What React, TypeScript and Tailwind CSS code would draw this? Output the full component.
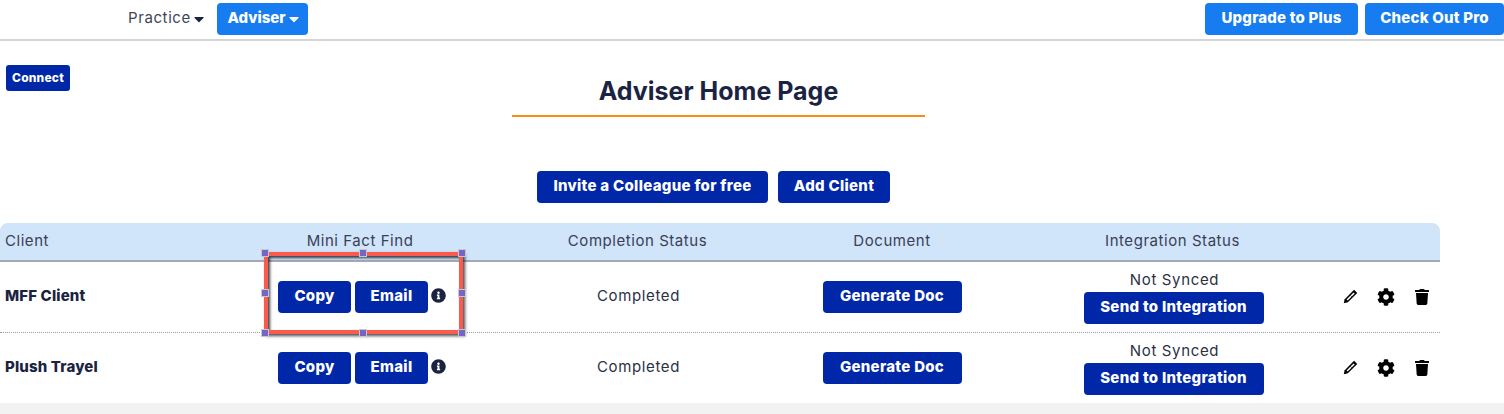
import { FaCaretDown, FaCog, FaTrash, FaInfoCircle } from "react-icons/fa";

const font = "font-['Inter','Liberation_Sans',sans-serif]";
const dark = "text-[#1b2342]";
const cols = "grid grid-cols-[260px_200px_355px_154px_361px_110px]";

function Btn({ children, className = "" }: { children: React.ReactNode; className?: string }) {
  return (
    <button className={`flex items-center justify-center h-8 pb-[1px] rounded-[4px] bg-[#0027a8] text-white text-[15px] font-extrabold tracking-[0.3px] whitespace-nowrap ${className}`}>
      {children}
    </button>
  );
}

function Pencil() {
  return (
    <svg viewBox="0 0 16 16" className="w-[15px] h-[15px]" fill="none">
      <path d="M11.8 .8 15.2 4.2 5.2 14.2 .8 15.2l1-4.4z" fill="#000" />
      <path d="M11.3 3.6 12.5 4.8 5 12.3 3.8 11.1z" fill="#fff" />
      <path d="M8 6.9 9.2 8.1" stroke="#000" strokeWidth="0.9" />
    </svg>
  );
}

function Handle({ className }: { className: string }) {
  return <span className={`absolute w-[8px] h-[8px] bg-[#7466c8] border border-[#c8c8c8] ${className}`} />;
}

function Row({ name, selected }: { name: string; selected?: boolean }) {
  return (
    <div className={`${cols} h-[70px] items-center text-[15px] tracking-[0.65px]`}>
      <div className={`pl-[5px] pb-[2px] font-extrabold tracking-[0.15px] ${dark}`}>{name}</div>
      <div className="relative flex items-center h-full">
        <div className="flex items-center gap-1 pl-[18px]">
          <Btn className="w-[73px]">Copy</Btn>
          <Btn className="w-[73px]">Email</Btn>
          <FaInfoCircle className="ml-[-1px] mb-[3px] w-[15px] h-[15px] text-[#1b2342]" />
        </div>
        {selected && (
          <div className="absolute left-[4px] top-[-10px] w-[199px] h-[82px] border-[4px] border-[#fb5a4e] shadow-[inset_2px_2px_3px_rgba(0,0,0,0.75),2px_2px_3px_rgba(0,0,0,0.7)]">
            <Handle className="left-[-7px] top-[-7px]" />
            <Handle className="left-[91px] top-[-7px]" />
            <Handle className="right-[-7px] top-[-7px]" />
            <Handle className="left-[-7px] top-[33px]" />
            <Handle className="right-[-7px] top-[33px]" />
            <Handle className="left-[-7px] bottom-[-7px]" />
            <Handle className="left-[91px] bottom-[-7px]" />
            <Handle className="right-[-7px] bottom-[-7px]" />
          </div>
        )}
      </div>
      <div className="text-center text-[#2b3145] pl-[2px] pb-[2px]">Completed</div>
      <div className="flex justify-center">
        <Btn className="w-[139px]">Generate Doc</Btn>
      </div>
      <div className="flex flex-col items-center pl-[48px]">
        <div className="text-[#2b3145] leading-[20px] mb-[2px] pl-[2px]">Not Synced</div>
        <Btn className="w-[180px]">Send to Integration</Btn>
      </div>
      <div className="flex items-center pl-[13px] pb-[1px] text-black">
        <Pencil />
        <FaCog className="ml-[19px] w-[18px] h-[18px]" />
        <FaTrash className="ml-[20px] w-[14px] h-[16px]" />
      </div>
    </div>
  );
}

export default function App() {
  return (
    <div className={`${font} w-[1504px] h-[414px] overflow-hidden bg-white flex flex-col`}>
      <header className="flex items-center justify-between h-[41px] shrink-0 border-b-2 border-[#d4d4d4] pb-[2px]">
        <div className="flex items-center pl-[128px]">
          <span className="flex items-center text-[15px] tracking-[0.6px] text-[#3f4658] w-[76px]">
            Practice
            <FaCaretDown className="w-4 h-4 text-[#1b2342] shrink-0" />
          </span>
          <button className="ml-[13px] flex items-center justify-center w-[91px] h-8 pl-[4px] rounded-[4px] bg-[#167cf0] text-white text-[15px] font-extrabold">
            Adviser
            <FaCaretDown className="w-4 h-4" />
          </button>
        </div>
        <div className="flex items-center gap-[7px]">
          <button className="w-[153px] h-8 rounded-[4px] bg-[#167cf0] text-white text-[15px] font-extrabold tracking-[0.2px]">Upgrade to Plus</button>
          <button className="w-[139px] h-8 rounded-[4px] bg-[#167cf0] text-white text-[15px] font-extrabold tracking-[0.2px]">Check Out Pro</button>
        </div>
      </header>

      <div className="relative h-[362px] shrink-0">
        <button className="absolute left-[6px] top-[24px] w-[64px] h-[26px] rounded-[3px] bg-[#0027a8] text-white text-[12px] font-extrabold tracking-[0.2px]">
          Connect
        </button>
        <div className="w-[1440px] flex flex-col items-center">
          <h1 className={`mt-[35px] w-[413px] ml-[-3px] text-center text-[25px] leading-[30px] font-bold ${dark} pb-[9px] border-b-2 border-[#fa8c16]`}>
            Adviser Home Page
          </h1>
          <div className="mt-[54px] flex justify-center gap-[10px] ml-[-13px]">
            <Btn className="w-[231px]">Invite a Colleague for free</Btn>
            <Btn className="w-[112px]">Add Client</Btn>
          </div>
        </div>
        <div className="mt-[20px] w-[1440px]">
          <div className={`${cols} h-[39px] pb-[1px] items-center rounded-t-[8px] bg-[#d0e4fa] border-b-2 border-[#a3a9bb] text-[15px] tracking-[0.55px] text-[#3a4055]`}>
            <div className="pl-[5px]">Client</div>
            <div className="text-center">Mini Fact Find</div>
            <div className="text-center">Completion Status</div>
            <div className="text-center">Document</div>
            <div className="text-center pl-[46px]">Integration Status</div>
            <div />
          </div>
          <Row name="MFF Client" selected />
          <div className="border-t border-dotted border-[#9a9aa8]" />
          <Row name="Plush Trayel" />
        </div>
      </div>
      <div className="flex-1 bg-[#f2f2f2]" />
    </div>
  );
}
